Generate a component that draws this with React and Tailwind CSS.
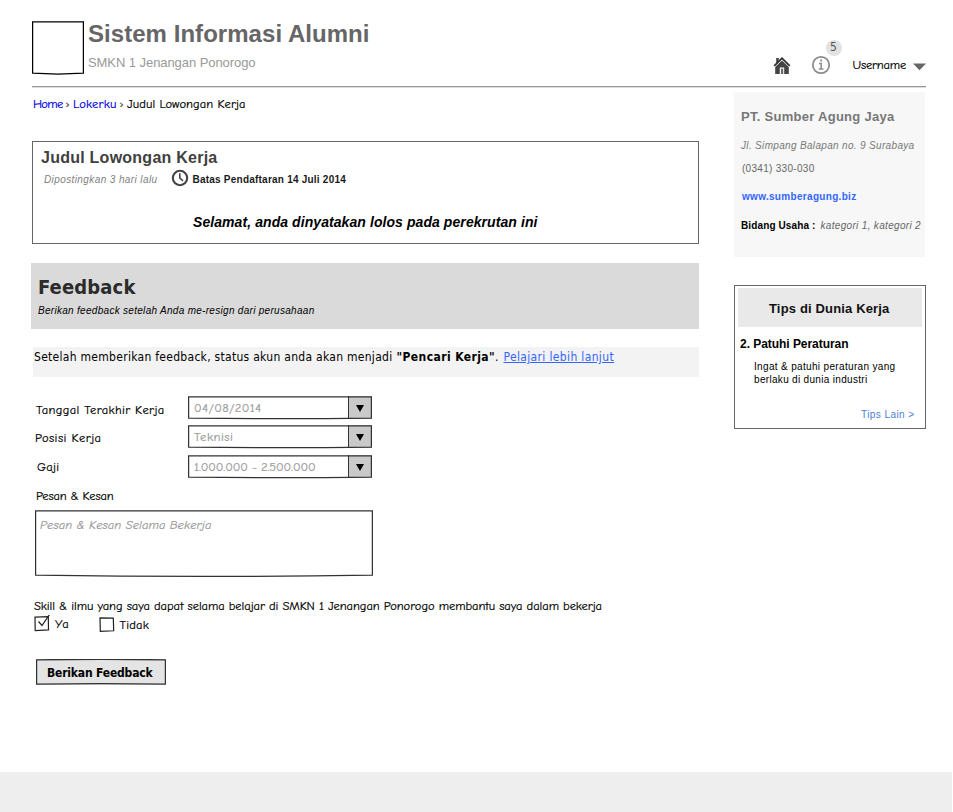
import { useLayoutEffect, useRef, useState } from "react";

const SANS = "font-['Liberation_Sans',Arial,sans-serif]";
const TAHOMA = "font-['DejaVu_Sans_Condensed','Noto_Sans',sans-serif]";
const HAND = "font-['Comic_Neue','Comic_Sans_MS','Noto_Sans',sans-serif] [-webkit-text-stroke:0.2px_currentColor]";

// One line of text, tracked so that it spans the given width.
function Line({ w, className = "", as: Tag = "span", children, ...rest }) {
  const ref = useRef(null);
  const [tracking, setTracking] = useState(0);
  useLayoutEffect(() => {
    const natural = ref.current.getBoundingClientRect().width;
    setTracking((w - 0.5 - natural) / String(children).length);
  }, []);
  return (
    <Tag
      ref={ref}
      {...rest}
      className={`block w-fit shrink-0 whitespace-pre leading-4 ${className}`}
      style={{ letterSpacing: tracking }}
    >
      {children}
    </Tag>
  );
}

// Hand-drawn outline laid over its parent, with slightly bowed edges.
function SketchFrame({ w, h, top = 0, bottom = 0, color = "#333" }) {
  const l = 0.6;
  const r = w - 0.6;
  return (
    <svg width={w} height={h + 2} viewBox={`0 0 ${w} ${h + 2}`} fill="none" stroke={color} strokeWidth="1.25" className="pointer-events-none absolute top-0 left-0">
      <path d={`M${l} 0.8Q${w / 2} ${0.8 - top} ${r} 0.8V${h - 0.8}Q${w / 2} ${h - 0.8 + bottom} ${l} ${h - 0.8}Z`} />
    </svg>
  );
}

function HomeIcon() {
  return (
    <svg width="18" height="18" viewBox="0 0 18 18" className="mt-[57px] shrink-0">
      <path d="M3.2 1h2.6v5H3.2z" fill="#444" />
      <path d="M9 0 0.6 8.2l1.3 1.3L9 2.6l7.1 6.9 1.3-1.3z" fill="#333" />
      <path d="M9 3.4 2.2 10V17h4.6v-6.6h4.4V17h4.6v-7z" fill="#444" />
      <path d="M8 11.6h2.2V17H8z" fill="#666" />
    </svg>
  );
}

function InfoIcon() {
  return (
    <svg width="20" height="20" viewBox="0 0 20 20" fill="none" stroke="#8c8c8c">
      <circle cx="10" cy="10" r="8.2" strokeWidth="1.8" />
      <path d="M8 8.5h2.2v5.2M7.8 13.9h4.6" strokeWidth="1.5" />
      <path d="M9.2 5.5h1.8" strokeWidth="1.8" />
    </svg>
  );
}

function ClockIcon() {
  return (
    <svg width="18" height="18" viewBox="0 0 18 18" fill="none" stroke="#444" className="shrink-0">
      <circle cx="9" cy="9" r="7.2" strokeWidth="2.1" />
      <path d="M8.8 4.2V9l3.2 2.8" strokeWidth="1.6" />
    </svg>
  );
}

function Select({ w, children }) {
  return (
    <div className="relative flex h-[23px] w-[184px] shrink-0">
      <div className={`flex-1 pt-[4px] pl-[6px] text-[12.5px] text-[#999] ${HAND}`}>
        <Line w={w}>{children}</Line>
      </div>
      <div className="flex w-[24px] items-center border-l-[1.5px] border-[#333] bg-[#c9c9c9] pt-px pl-[7px]">
        <svg width="8" height="7" viewBox="0 0 8 7">
          <path d="M0 0h8L4 7z" fill="#000" />
        </svg>
      </div>
      <SketchFrame w={184} h={23} bottom={1} />
    </div>
  );
}

function Header() {
  return (
    <header className={`mx-8 mr-[27px] h-[88px] ${SANS}`}>
      <div className="flex h-[87px] border-b border-[#999] shadow-[0_1px_0_#dcdcdc]">
        <div className="relative mt-[21px] h-[53px] w-[52px] shrink-0">
          <SketchFrame w={52} h={53} bottom={1.6} color="#000" />
        </div>
        <div className="ml-1 flex-1 pt-[26px]">
          <Line w={282} as="h1" className="text-[24px] font-bold text-[#666]">Sistem Informasi Alumni</Line>
          <Line w={168} className="mt-[13px] text-[13px] text-[#999]">SMKN 1 Jenangan Ponorogo</Line>
        </div>
        <HomeIcon />
        <div className="relative mt-[55px] ml-[20px] h-5 w-5 shrink-0">
          <InfoIcon />
          <span className={`absolute -top-[15px] left-[15px] h-4 w-4 rounded-full bg-[#e2e2e2] text-center text-[12px] leading-[15px] text-[#555] ${TAHOMA}`}>5</span>
        </div>
        <div className={`mt-[57px] ml-[22px] text-[12.5px] text-black ${HAND}`}>
          <Line w={54}>Username</Line>
        </div>
        <svg width="13" height="8" viewBox="0 0 13 8" className="mt-[63px] ml-[7px] shrink-0">
          <path d="M0 0.5h13L6.5 7.2z" fill="#666" />
        </svg>
      </div>
    </header>
  );
}

function Breadcrumb() {
  return (
    <nav className={`mt-[8px] ml-[33px] flex text-[12.5px] ${HAND}`}>
      <Line w={30} className="text-[#0000dd]">Home</Line>
      <Line w={5} className="ml-[3px] text-[12px] text-[#555]">›</Line>
      <Line w={44} className="ml-[3px] text-[#0000dd]">Lokerku</Line>
      <Line w={5} className="ml-[3px] text-[12px] text-[#555]">›</Line>
      <Line w={119} className="ml-[3px] text-black">Judul Lowongan Kerja</Line>
    </nav>
  );
}

function JobCard() {
  return (
    <section className={`mt-[29px] ml-8 h-[103px] w-[667px] border border-[#666] ${SANS}`}>
      <Line w={177} as="h2" className="mt-[8px] ml-2 text-[16px] font-bold text-[#404040]">Judul Lowongan Kerja</Line>
      <div className="mt-[6px] ml-[11px] flex h-4 items-center">
        <Line w={114} className="text-[10px] text-[#808080] italic">Dipostingkan 3 hari lalu</Line>
        <span className="-mt-[4px] mr-1 ml-[13px]"><ClockIcon /></span>
        <Line w={154} className="text-[10px] font-bold text-[#1a1a1a]">Batas Pendaftaran 14 Juli 2014</Line>
      </div>
      <Line w={345} className="mt-[26px] ml-[160px] text-[14px] font-bold text-black italic">
        {"Selamat, anda dinyatakan lolos pada perekrutan ini"}
      </Line>
    </section>
  );
}

function FeedbackForm() {
  return (
    <>
      <section className={`mt-[19px] ml-[31px] h-[66px] w-[668px] bg-[#dadada] pl-[7px] ${TAHOMA}`}>
        <Line w={98} as="h2" className="pt-[16px] text-[20px] font-bold text-[#2b2b2b]">Feedback</Line>
        <Line w={277} className={`mt-[8px] text-[10px] text-black italic ${SANS}`}>Berikan feedback setelah Anda me-resign dari perusahaan</Line>
      </section>
      <p className={`mt-[18px] ml-[33px] flex h-[30px] w-[666px] bg-[#f3f3f3] pt-[2px] pl-px text-[12px] text-black ${TAHOMA}`}>
        <Line w={359}>Setelah memberikan feedback, status akun anda akan menjadi</Line>
        <Line w={99} className="ml-1 font-bold">"Pencari Kerja"</Line>
        <Line w={4}>.</Line>
        <Line w={111} as="a" className="ml-[5px] text-[#3366ff] underline">Pelajari lebih lanjut</Line>
      </p>
      <form className={`mt-[19px] ml-[34px] w-[600px] text-[12.5px] text-black ${HAND}`}>
        <div className="flex h-[29px]">
          <div className="w-[154px] pt-[6px] pl-[2px]"><Line w={129}>Tanggal Terakhir Kerja</Line></div>
          <Select w={68}>04/08/2014</Select>
        </div>
        <div className="flex h-[30px]">
          <div className="w-[154px] pt-[5px] pl-px"><Line w={67}>Posisi Kerja</Line></div>
          <Select w={40}>Teknisi</Select>
        </div>
        <div className="flex h-[32px]">
          <div className="w-[154px] pt-[4px] pl-[3px]"><Line w={23}>Gaji</Line></div>
          <Select w={122}>1.000.000 - 2.500.000</Select>
        </div>
        <Line w={78} className="ml-[2px] pt-px">Pesan &amp; Kesan</Line>
        <div className="relative mt-[6px] ml-px h-[66px] w-[338px] pt-[7px] pl-[5px] text-[#999] italic">
          <Line w={172}>Pesan &amp; Kesan Selama Bekerja</Line>
          <SketchFrame w={338} h={66} bottom={2.4} />
        </div>
        <Line w={568.5} className="mt-[22px]">Skill &amp; ilmu yang saya dapat selama belajar di SMKN 1 Jenangan Ponorogo membantu saya dalam bekerja</Line>
        <div className="mt-[1px] flex h-[20px]">
          <svg width="17" height="18" viewBox="0 0 17 18" fill="none" stroke="#222" strokeWidth="1.2">
            <path d="M1 2.2 14.3 1.7l.2 13.2L1.2 15.5z" />
            <path d="M4.5 6.5 8 10.5 15.5 -0.5" />
          </svg>
          <Line w={15} className="mt-[1px] ml-1">Ya</Line>
          <svg width="17" height="18" viewBox="0 0 17 18" fill="none" stroke="#222" strokeWidth="1.2" className="ml-[29px]">
            <path d="M1 2.8 14.3 3.2l.4 12.6L1.3 16.4z" />
          </svg>
          <Line w={30} className="mt-[2px] ml-[4px]">Tidak</Line>
        </div>
        <button type="button" className={`relative mt-[24px] ml-[2px] flex h-[26px] w-[130px] items-center bg-[#e4e4e4] pt-px pl-[11px] text-[12px] font-bold [-webkit-text-stroke:0] ${TAHOMA}`}>
          <Line w={106}>Berikan Feedback</Line>
          <SketchFrame w={130} h={26} top={0.8} bottom={-1} />
        </button>
      </form>
    </>
  );
}

function Sidebar() {
  return (
    <aside className={`mt-[4px] w-48 shrink-0 text-[10px] ${SANS}`}>
      <section className="h-[165px] w-[191px] bg-[#f7f7f7] pl-[7px] text-[#666]">
        <Line w={154} as="h3" className="pt-[17px] text-[13px] font-bold text-[#777]">PT. Sumber Agung Jaya</Line>
        <Line w={174} className="mt-[13px] text-[#777] italic">Jl. Simpang Balapan no. 9 Surabaya</Line>
        <Line w={73} className="mt-[7px] ml-px">(0341) 330-030</Line>
        <Line w={115} className="mt-[12px] ml-px font-bold text-[#3366ff]">www.sumberagung.biz</Line>
        <div className="mt-[13px] flex">
          <Line w={75} className="font-bold text-black">Bidang Usaha :</Line>
          <Line w={101} className="ml-[5px] italic">kategori 1, kategori 2</Line>
        </div>
      </section>
      <section className="mt-[28px] h-36 w-48 border border-[#666] text-black">
        <div className="mt-[2px] ml-[3px] h-[39px] w-[184px] bg-[#e9e9e9] pt-[13px] pl-[31px]">
          <Line w={121} as="h3" className="text-[13px] font-bold text-[#111]">Tips di Dunia Kerja</Line>
        </div>
        <Line w={109} as="h4" className="mt-[9px] ml-[5px] text-[12px] font-bold">2. Patuhi Peraturan</Line>
        <Line w={142} className="mt-[7px] ml-[19px]">Ingat &amp; patuhi peraturan yang</Line>
        <Line w={114} className="-mt-[3px] ml-[19px]">berlaku di dunia industri</Line>
        <Line w={54} className="mt-[19px] ml-[126px] text-[#4a7fd4]">Tips Lain &gt;</Line>
      </section>
    </aside>
  );
}

export default function App() {
  return (
    <div className="flex h-[812px] w-[953px] flex-col overflow-hidden bg-white">
      <Header />
      <div className="flex flex-1">
        <main className="w-[734px] shrink-0">
          <Breadcrumb />
          <JobCard />
          <FeedbackForm />
        </main>
        <Sidebar />
      </div>
      <footer className="h-10 w-[952px] shrink-0 bg-[#eee]" />
    </div>
  );
}
